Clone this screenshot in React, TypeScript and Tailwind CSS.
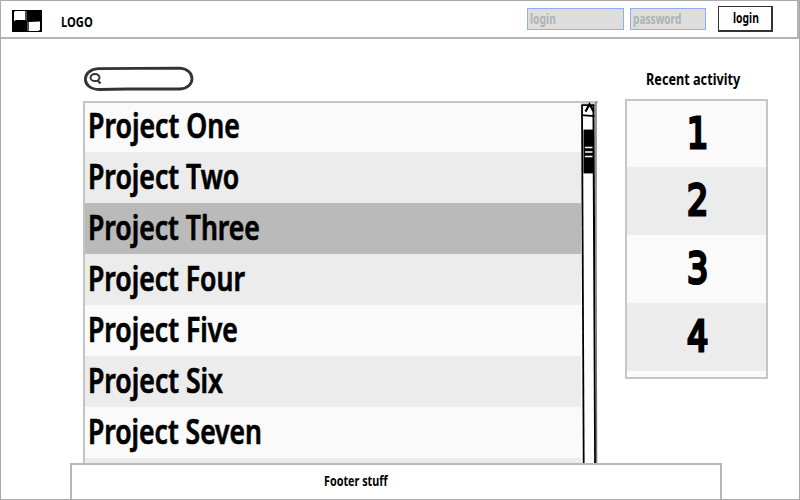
import { useLayoutEffect, useRef, useState } from "react";

type FitProps = { text: string; width: number; className?: string };

// Condenses a label horizontally so that it fills the given width.
function Fit({ text, width, className = "" }: FitProps) {
  const ref = useRef<HTMLSpanElement>(null);
  const [scale, setScale] = useState(0.75);
  useLayoutEffect(() => {
    if (ref.current) setScale(width / ref.current.offsetWidth);
  }, [width, text]);
  return (
    <span className={`block whitespace-nowrap ${className}`} style={{ width }}>
      <span ref={ref} className="inline-block origin-left" style={{ transform: `scaleX(${scale})` }}>
        {text}
      </span>
    </span>
  );
}

const projects = [
  { name: "Project One", width: 152, bg: "bg-[#fafafa]" },
  { name: "Project Two", width: 151, bg: "bg-[#ececec]" },
  { name: "Project Three", width: 172, bg: "bg-[#bababa]" },
  { name: "Project Four", width: 157, bg: "bg-[#ececec]" },
  { name: "Project Five", width: 150, bg: "bg-[#fafafa]" },
  { name: "Project Six", width: 135, bg: "bg-[#ececec]" },
  { name: "Project Seven", width: 174, bg: "bg-[#fafafa]" },
];

const activity = [
  { n: "1", bg: "bg-[#fafafa]" },
  { n: "2", bg: "bg-[#ececec]" },
  { n: "3", bg: "bg-[#fafafa]" },
  { n: "4", bg: "bg-[#ececec]" },
];

function Logo() {
  return (
    <svg width="30" height="22" viewBox="0 0 30 22">
      <path d="M0 0H30V22H0Z" fill="#000" />
      <path d="M2 2L3 1H13V10H4L2 11Z M17 12L28 11.5V20L26 21H17Z" fill="#fff" />
      <path d="M14 1V10.5M16 11.5V21" stroke="#999" />
    </svg>
  );
}

function SearchBox() {
  return (
    <svg width="112" height="26" viewBox="0 0 112 26" fill="none" stroke="#333" className="block">
      <path d="M15 2.6L97 2.2C113 3.4 113 22 97 23L45 23L16 23.5C-2 23 -2 4 15 2.6Z" strokeWidth="2.8" />
      <ellipse cx="12" cy="11.5" rx="4.5" ry="3.6" strokeWidth="2" />
      <path d="M14.5 14.3L17.5 17.5" strokeWidth="2.2" />
    </svg>
  );
}

function Scrollbar() {
  return (
    <svg width="17" height="364" viewBox="0 0 17 364" fill="none" className="-mt-0.5 block">
      <path d="M0 3H14L14.5 364H3Z" fill="#fdfdfd" />
      <path d="M0 1H16" stroke="#c4c4c4" strokeWidth="2" />
      <path d="M1 3L2.7 364" stroke="#000" strokeWidth="1.8" />
      <path d="M12.5 3L14.2 364" stroke="#000" strokeWidth="2" />
      <path d="M15 0V150L15.6 364" stroke="#777" strokeWidth="1.5" />
      <path d="M0.5 3.5H13.5M0.5 13.5L13.5 14.5" stroke="#000" strokeWidth="1.8" />
      <path d="M4.5 10L8.5 2.5L12.5 9.5" stroke="#000" strokeWidth="2.2" />
      <path d="M2.5 28H13V72H2.5Z" fill="#000" />
      <path d="M4 46H11.5M4 50.5H11.5M4 55H11.5" stroke="#fff" strokeWidth="1.5" />
    </svg>
  );
}

export default function App() {
  return (
    <div className="flex h-[500px] w-[800px] flex-col overflow-hidden border border-[#aaa] bg-white font-['Noto_Sans',sans-serif] font-semibold text-black">
      <header className="flex h-[38px] shrink-0 items-start border-r-2 border-b-2 border-[#b4b4b4]">
        <div className="mt-[9px] ml-[11px]"><Logo /></div>
        <Fit text="LOGO" width={32} className="mt-[10px] ml-[19px] text-[15px] leading-5 font-bold" />
        <div className="mt-[7px] ml-[434px] h-[22px] w-[97px] border border-[#8eaefc] bg-[#ddd] pl-0.5 text-[#adb4b2]">
          <Fit text="login" width={26} className="text-[13.5px] leading-[21px] font-bold" />
        </div>
        <div className="mt-[7px] ml-1.5 h-[22px] w-[76px] border border-[#8eaefc] bg-[#ddd] pl-0.5 text-[#adb4b2]">
          <Fit text="password" width={48} className="text-[13.5px] leading-[21px] font-bold" />
        </div>
        <div className="mt-[5px] ml-3 flex h-[26px] w-[55px] justify-center border border-r-2 border-b-2 border-[#333] bg-white pl-0.5">
          <Fit text="login" width={26} className="text-[13.5px] leading-[23px] font-bold" />
        </div>
      </header>

      <main className="flex h-[424px] shrink-0 overflow-hidden pl-[82px]">
        <div className="w-[515px]">
          <div className="h-[62px] pt-[27px]"><SearchBox /></div>
          <div className="flex h-[362px] border-t-2 border-l-2 border-[#c4c4c4]">
            <div className="w-[498px]">
              {projects.map((p, i) => (
                <div key={p.name} className={`flex items-center pl-[3px] ${i === 0 ? "h-[49px] pb-1" : "h-[51px] pb-[3px]"} ${p.bg}`}>
                  <Fit text={p.name} width={p.width} className="text-[33.5px] leading-[45px] [-webkit-text-stroke:0.7px_#000]" />
                </div>
              ))}
              <div className="h-2 bg-[#ececec]" />
            </div>
            <Scrollbar />
          </div>
        </div>
        <aside className="ml-[27px] w-[143px]">
          <div className="flex h-[60px] justify-center pr-2 pt-[29px]">
            <Fit text="Recent activity" width={94} className="text-[15.5px] leading-[22px] font-bold" />
          </div>
          <div className="h-[280px] border-2 border-[#c6c6c6] bg-[#fafafa]">
            {activity.map((a, i) => (
              <div key={a.n} className={`flex items-center justify-center pb-0.5 pl-0.5 ${i === 0 ? "h-[66px]" : "h-[68px]"} ${a.bg}`}>
                <Fit text={a.n} width={21} className="font-['DejaVu_Sans',sans-serif] text-[43px] leading-[60px] font-normal [-webkit-text-stroke:3.2px_#000]" />
              </div>
            ))}
          </div>
        </aside>
      </main>

      <footer className="ml-[69px] flex h-[36px] w-[652px] shrink-0 justify-center border-x-2 border-t-2 border-[#b5b9ba] bg-white pr-[80px]">
        <Fit text="Footer stuff" width={64} className="pt-[6px] text-[13.5px] leading-5 font-bold" />
      </footer>
    </div>
  );
}
